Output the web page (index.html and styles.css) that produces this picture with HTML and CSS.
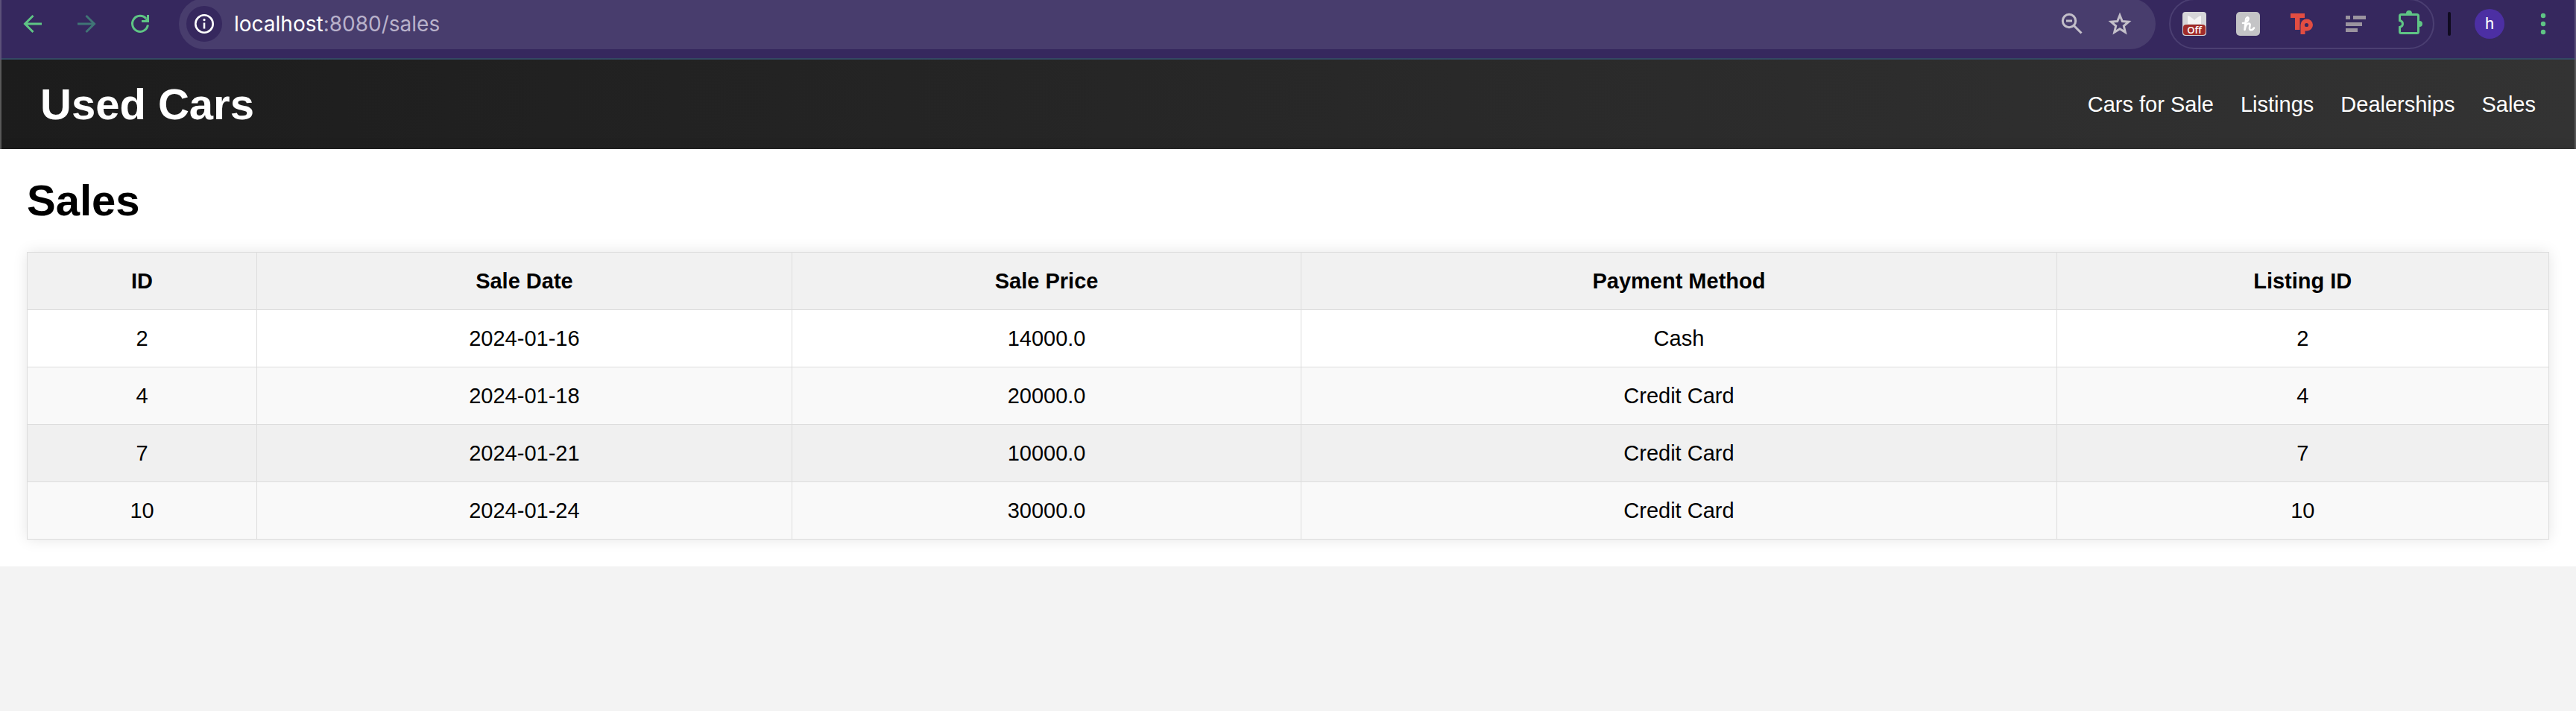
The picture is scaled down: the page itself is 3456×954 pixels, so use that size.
FILE: index.html
```html
<!DOCTYPE html>
<html lang="en">
<head>
<meta charset="utf-8">
<title>Used Cars - Sales</title>
<link rel="stylesheet" href="styles.css">
</head>
<body>
<div class="toolbar">
  <div class="nav-buttons">
    <button class="icon-btn" type="button" aria-label="Back">
      <svg viewBox="0 0 32 32"><path d="M28 16H6M16.500 5L5.500 16l11 11" fill="none" stroke="#5fc585" stroke-width="3"/></svg>
    </button>
    <button class="icon-btn" type="button" aria-label="Forward" disabled>
      <svg viewBox="0 0 32 32"><path d="M4 16h22M15.500 5l11 11-11 11" fill="none" stroke="#407576" stroke-width="3"/></svg>
    </button>
    <button class="icon-btn" type="button" aria-label="Reload">
      <svg viewBox="0 0 32 32"><path d="M26.400 17.500A10.500 10.500 0 1 1 24 9" fill="none" stroke="#5fc585" stroke-width="3"/><path d="M28 4v10H18v-3h4.500L25 8.500V4z" fill="#5fc585"/></svg>
    </button>
  </div>
  <div class="address">
    <button class="site-info" type="button" aria-label="Site information">
      <svg viewBox="0 0 32 32"><circle cx="16" cy="16" r="11.700" fill="none" stroke="#fff" stroke-width="2.600"/><path d="M16 14.500v8" stroke="#fff" stroke-width="2.600"/><circle cx="16" cy="10.700" r="1.600" fill="#fff"/></svg>
    </button>
    <span class="url">localhost<span class="url-rest">:8080/sales</span></span>
    <div class="address-actions">
      <button class="icon-btn" type="button" aria-label="Zoom">
        <svg viewBox="0 0 32 32"><g fill="none" stroke="#c3bfc9" stroke-width="3"><circle cx="12" cy="12" r="8.700"/><path d="M18 18l10.500 10.500M8 12h8"/></g></svg>
      </button>
      <button class="icon-btn" type="button" aria-label="Bookmark this page">
        <svg viewBox="0 0 32 32"><path d="M16 4.500l3.300 8 8.500.700-6.500 5.600 2 8.400L16 22.700l-7.300 4.500 2-8.400-6.500-5.600 8.500-.700z" fill="none" stroke="#c3bfc9" stroke-width="3"/></svg>
      </button>
    </div>
  </div>
  <div class="extensions">
    <button class="icon-btn" type="button" aria-label="Blocker, off">
      <svg viewBox="0 0 32 32"><rect width="32" height="32" rx="4" fill="#d6d6d8"/><path d="M7 5c4 1 7 4 9 6 2-2 5-5 9-6v11H7z" fill="#f5f5f5"/><rect x="1" y="17" width="30" height="14" rx="4" fill="#a12c2a"/><text class="badge-text" x="16" y="28.500" text-anchor="middle">Off</text></svg>
    </button>
    <button class="icon-btn" type="button" aria-label="Coupons">
      <svg viewBox="0 0 32 32"><rect width="32" height="32" rx="5" fill="#c4c4c6"/><path d="M9 15c4 0 8-3 7.500-6.500C16 6 13 7.500 13 11l-1.500 13c1-5 3-8.500 5.500-8.500 3 0 1 4 1 6.500 0 3 4 3 6-.500" fill="none" stroke="#fff" stroke-width="2.600" stroke-linecap="round" stroke-linejoin="round"/></svg>
    </button>
    <button class="icon-btn" type="button" aria-label="Teleport">
      <svg viewBox="0 0 32 32"><path d="M1 2h19v6h-6.500v16H7V8H1z" fill="#e24d42"/><path d="M14.500 30V17.500a8.250 8 0 1 1 8.500 8h-2.500V30z" fill="#e24d42"/><circle cx="22.500" cy="17.500" r="2.600" fill="#36285e"/></svg>
    </button>
    <button class="icon-btn" type="button" aria-label="Reading list">
      <svg viewBox="0 0 32 32"><path d="M3 5h6v5H3zM13 5h17v5H13zM3 14h22v5H3zM3 22h16v5H3z" fill="#9b949f"/></svg>
    </button>
    <button class="icon-btn" type="button" aria-label="Extensions">
      <svg class="overhang" viewBox="0 0 32 32"><path d="M3.500 5.500q0-2 2-2h21q2 0 2 2v21q0 2-2 2h-21q-2 0-2-2v-6q4-1 4-4.500t-4-4.500z" fill="none" stroke="#5fc585" stroke-width="3"/><path d="M12 2a4 4 0 0 1 8 0zM30 12a4 4 0 0 1 0 8z" fill="#5fc585"/></svg>
    </button>
  </div>
  <span class="divider"></span>
  <button class="avatar" type="button" aria-label="Profile">h</button>
  <button class="icon-btn" type="button" aria-label="Menu">
    <svg viewBox="0 0 32 32"><g fill="#5fc585"><circle cx="16" cy="5" r="3.200"/><circle cx="16" cy="16" r="3.200"/><circle cx="16" cy="27" r="3.200"/></g></svg>
  </button>
</div>

<header class="site-header">
  <h1 class="brand">Used Cars</h1>
  <nav class="site-nav">
    <a href="#cars">Cars for Sale</a>
    <a href="#listings">Listings</a>
    <a href="#dealerships">Dealerships</a>
    <a href="#sales">Sales</a>
  </nav>
</header>

<main class="content">
  <h1 class="page-title">Sales</h1>
  <table class="sales">
    <thead>
      <tr><th>ID</th><th>Sale Date</th><th>Sale Price</th><th>Payment Method</th><th>Listing ID</th></tr>
    </thead>
    <tbody>
      <tr><td>2</td><td>2024-01-16</td><td>14000.0</td><td>Cash</td><td>2</td></tr>
      <tr><td>4</td><td>2024-01-18</td><td>20000.0</td><td>Credit Card</td><td>4</td></tr>
      <tr class="active"><td>7</td><td>2024-01-21</td><td>10000.0</td><td>Credit Card</td><td>7</td></tr>
      <tr><td>10</td><td>2024-01-24</td><td>30000.0</td><td>Credit Card</td><td>10</td></tr>
    </tbody>
  </table>
</main>
</body>
</html>
```

FILE: styles.css
```css
* {
  box-sizing: border-box;
}

body {
  margin: 0;
  background: #f3f3f3;
  color: #000;
  font-family: "Liberation Sans", Arial, sans-serif;
  font-size: 29px;
  line-height: 32px;
}

button {
  flex: none;
  padding: 0;
  border: 0;
  background: none;
  font: inherit;
}

svg {
  display: block;
  width: 32px;
  height: 32px;
}

.overhang {
  overflow: visible;
}

/* Browser toolbar */
.toolbar {
  display: flex;
  align-items: center;
  margin-top: -2px;
  padding: 0 26px 14px;
  border: solid #5c5179;
  border-width: 0 2px;
  background: #36285e;
  box-shadow: inset 0 -2px #344863;
}

.nav-buttons {
  display: flex;
  gap: 40px;
  margin-right: 36px;
}

.icon-btn {
  width: 32px;
  height: 32px;
}

.address {
  display: flex;
  flex: 1;
  align-items: center;
  height: 68px;
  padding: 0 32px 0 10px;
  border-radius: 34px;
  background: #483d6d;
}

.site-info {
  display: grid;
  place-items: center;
  width: 48px;
  height: 48px;
  margin-right: 16px;
  border-radius: 50%;
  background: #36285e;
}

.url {
  flex: 1;
  color: #fff;
  font-family: Inter, sans-serif;
  font-size: 28px;
}

.url-rest {
  color: #b9b2cb;
}

.address-actions {
  display: flex;
  gap: 32px;
}

.extensions {
  display: flex;
  gap: 40px;
  align-items: center;
  height: 68px;
  margin: 0 18px;
  padding: 0 16px;
  border: 2px solid #4b3f72;
  border-radius: 34px;
}

.badge-text {
  fill: #fff;
  font-family: "Open Sans", sans-serif;
  font-size: 13px;
  font-weight: 600;
}

.divider {
  width: 4px;
  height: 32px;
  border-radius: 2px;
  background: #100b20;
}

.avatar {
  width: 40px;
  height: 40px;
  margin: 0 36px 0 32px;
  border-radius: 50%;
  background: #4c2fa3;
  color: #fff;
  font-family: Roboto, sans-serif;
  font-size: 22px;
}

/* Site header */
.site-header {
  display: flex;
  align-items: center;
  justify-content: space-between;
  padding: 27px 52px;
  border: solid #585858;
  border-width: 0 2px;
  background: linear-gradient(to right, #1c1c1c, #333) border-box;
  color: #fff;
}

.brand,
.page-title {
  margin: 0;
  font-size: 58px;
  line-height: 66px;
}

.site-nav {
  display: flex;
  gap: 36px;
}

.site-nav a {
  color: inherit;
  text-decoration: none;
}

/* Page content */
.content {
  padding: 36px;
  background: #fff;
  box-shadow: 0 2px 18px rgba(0, 0, 0, 0.1);
}

.sales {
  width: 100%;
  margin-top: 36px;
  border-collapse: collapse;
  box-shadow: 0 0 18px rgba(0, 0, 0, 0.1);
  text-align: center;
}

.sales th,
.sales td {
  padding: 22px 27px;
  border: 1px solid #ddd;
}

.sales th {
  background: #f1f1f1;
}

.sales tbody tr:nth-child(even) {
  background: #f9f9f9;
}

.sales tbody tr.active {
  background: #f0f0f0;
}
```
